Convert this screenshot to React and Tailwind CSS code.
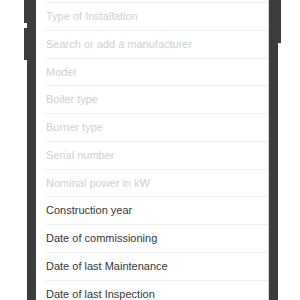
import React from 'react';

const fields = [
  { label: 'Type of Installation', filled: false },
  { label: 'Search or add a manufacturer', filled: false },
  { label: 'Model', filled: false },
  { label: 'Boiler type', filled: false },
  { label: 'Burner type', filled: false },
  { label: 'Serial number', filled: false },
  { label: 'Nominal power in kW', filled: false },
  { label: 'Construction year', filled: true },
  { label: 'Date of commissioning', filled: true },
  { label: 'Date of last Maintenance', filled: true },
  { label: 'Date of last Inspection', filled: true },
];

export default function App() {
  return (
    <div className="w-[300px] h-[300px] overflow-hidden bg-white flex" style={{ fontFamily: '"Liberation Sans", Arial, sans-serif' }}>
      {/* left side of phone */}
      <div className="w-[24px]" />
      <div className="w-[3px] flex flex-col">
        <div className="h-[23px] bg-[#3c3c3c]" />
        <div className="h-[5px]" />
        <div className="h-[32px] bg-[#3c3c3c]" />
      </div>
      <div className="w-[9px] bg-[#3c3c3c]" />

      {/* screen */}
      <div className="flex-1 bg-white pl-[9px] flex flex-col">
        <div className="h-[3px] shrink-0 border-b border-[#efefef]" />
        {fields.map((f) => (
          <div
            key={f.label}
            className="h-[27.75px] shrink-0 border-b border-[#efefef] flex items-center text-[11px] whitespace-nowrap"
          >
            <span className={f.filled ? 'text-[#383838] pl-px' : 'text-[#d0d0d4] pl-px'}>{f.label}</span>
          </div>
        ))}
      </div>

      {/* right side of phone */}
      <div className="w-[10px] bg-[#3c3c3c] border-l border-[#d8d8d8]" />
      <div className="w-[3px] flex flex-col">
        <div className="h-[43px] bg-[#3c3c3c]" />
      </div>
      <div className="w-[19px]" />
    </div>
  );
}
